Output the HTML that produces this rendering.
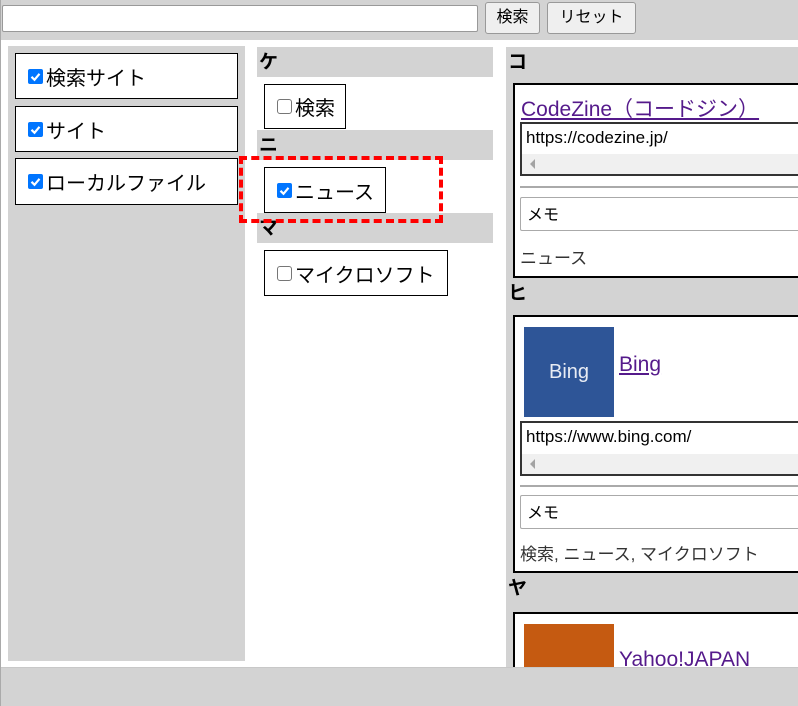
<!DOCTYPE html>
<html style="width:798px;height:706px;overflow:hidden"><head><meta charset="utf-8"><style>
*{box-sizing:border-box;margin:0;padding:0}
body{width:798px;height:706px;overflow:hidden;background:#fff;position:relative;font-family:"Liberation Sans","Noto Sans CJK JP",sans-serif;color:#000}
.a{position:absolute}
.g{background:#d3d3d3}
.box{position:absolute;border:1px solid #000;background:#fff;font-size:20px;display:flex;align-items:center;padding-left:12px;white-space:nowrap}
.cb{display:inline-block;width:15px;height:15px;border-radius:2px;background:#0075ff;margin-right:3px;position:relative;flex:none}
.cb svg{position:absolute;left:0;top:0}
.ub{display:inline-block;width:15px;height:15px;border-radius:3px;border:1px solid #767676;background:#fff;margin-right:3px;flex:none}
.hd{position:absolute;background:#d3d3d3;font-weight:bold;font-size:19px;padding-left:2px;padding-top:3px;line-height:26px}
.card{position:absolute;border:2px solid #000;border-right:none;background:#fff;overflow:hidden}
a{color:#551a8b;text-decoration:underline}
.url{position:absolute;border:2px solid #333;border-right:none;background:#fff;font-size:17px}
.url .s{position:absolute;left:0;right:0;bottom:0;height:20px;background:#f0f0f0}
.url .s:before{content:"";position:absolute;left:8px;top:5px;border-right:5px solid #a3a3a3;border-top:5px solid transparent;border-bottom:5px solid transparent}
.memo{position:absolute;border:1px solid #aaa;border-right:none;background:#fff;font-size:16px;padding:3px 6px;border-radius:2px 0 0 2px}
.hr{position:absolute;height:2px;background:#aaa}
</style></head><body>
<div class="a g" style="left:0;top:0;width:798px;height:40px"></div>
<div class="a" style="left:2px;top:5px;width:476px;height:27px;background:#fff;border:1px solid #999;border-radius:2px"></div>
<div class="a" style="left:485px;top:2px;width:55px;height:32px;background:#efefef;border:1px solid #999;border-radius:3px;font-size:16px;text-align:center;line-height:30px">検索</div>
<div class="a" style="left:547px;top:2px;width:89px;height:32px;background:#efefef;border:1px solid #999;border-radius:3px;font-size:16px;text-align:center;line-height:30px">リセット</div>

<div class="a g" style="left:8px;top:46px;width:237px;height:615px"></div>
<div class="box" style="left:15px;top:53px;width:223px;height:46px"><span class="cb"><svg width="15" height="15"><path d="M3.5 7.8l3 3 5-6" stroke="#fff" stroke-width="2.2" fill="none"/></svg></span>検索サイト</div>
<div class="box" style="left:15px;top:106px;width:223px;height:46px"><span class="cb"><svg width="15" height="15"><path d="M3.5 7.8l3 3 5-6" stroke="#fff" stroke-width="2.2" fill="none"/></svg></span>サイト</div>
<div class="box" style="left:15px;top:158px;width:223px;height:47px"><span class="cb"><svg width="15" height="15"><path d="M3.5 7.8l3 3 5-6" stroke="#fff" stroke-width="2.2" fill="none"/></svg></span>ローカルファイル</div>

<div class="hd" style="left:257px;top:47px;width:236px;height:30px">ケ</div>
<div class="box" style="left:264px;top:84px;width:82px;height:45px;padding-left:12px">
<span class="ub"></span>検索</div>
<div class="hd" style="left:257px;top:130px;width:236px;height:30px">ニ</div>
<div class="box" style="left:264px;top:167px;width:122px;height:46px"><span class="cb"><svg width="15" height="15"><path d="M3.5 7.8l3 3 5-6" stroke="#fff" stroke-width="2.2" fill="none"/></svg></span>ニュース</div>
<div class="hd" style="left:257px;top:213px;width:236px;height:30px">マ</div>
<div class="box" style="left:264px;top:250px;width:184px;height:46px"><span class="ub"></span>マイクロソフト</div>
<div class="a" style="left:239px;top:156px;width:204px;height:67px;border:4px dashed #f00"></div>

<div class="hd" style="left:506px;top:47px;width:292px;height:36px">コ</div>
<div class="a g" style="left:506px;top:77px;width:7px;height:590px"></div>
<div class="card" style="left:513px;top:83px;width:285px;height:195px">
<div class="a" style="left:6px;top:8px;font-size:21px;white-space:nowrap"><a>CodeZine（コードジン）</a></div>
</div>
<div class="url" style="left:520px;top:122px;width:278px;height:54px"><div style="padding:4px 4px">https://codezine.jp/</div><div class="s"></div></div>
<div class="hr" style="left:520px;top:186px;width:278px"></div>
<div class="memo" style="left:520px;top:197px;width:278px;height:34px">メモ</div>
<div class="a" style="left:520px;top:244px;font-size:17px;color:#333">ニュース</div>

<div class="hd" style="left:506px;top:278px;width:292px;height:38px">ヒ</div>
<div class="card" style="left:513px;top:315px;width:285px;height:258px">
<div class="a" style="left:9px;top:10px;width:90px;height:90px;background:#2e5597;color:#e8ecf4;font-size:20px;text-align:center;line-height:90px">Bing</div>
<div class="a" style="left:104px;top:36px;font-size:21px"><a>Bing</a></div>
</div>
<div class="url" style="left:520px;top:421px;width:278px;height:55px"><div style="padding:4px 4px">https://www.bing.com/</div><div class="s"></div></div>
<div class="hr" style="left:520px;top:485px;width:278px"></div>
<div class="memo" style="left:520px;top:495px;width:278px;height:34px">メモ</div>
<div class="a" style="left:520px;top:540px;font-size:17px;color:#333">検索, ニュース, マイクロソフト</div>

<div class="hd" style="left:506px;top:573px;width:292px;height:40px">ヤ</div>
<div class="card" style="left:513px;top:612px;width:285px;height:60px">
<div class="a" style="left:9px;top:10px;width:90px;height:90px;background:#c55a11"></div>
<div class="a" style="left:104px;top:34px;font-size:21px;white-space:nowrap"><a>Yahoo!JAPAN</a></div>
</div>

<div class="a g" style="left:0;top:667px;width:798px;height:39px;border-top:1px solid #c8c8c8;z-index:5"></div>
<div class="a" style="left:0;top:0;width:1px;height:706px;background:#aaa;z-index:6"></div>
</body></html>
